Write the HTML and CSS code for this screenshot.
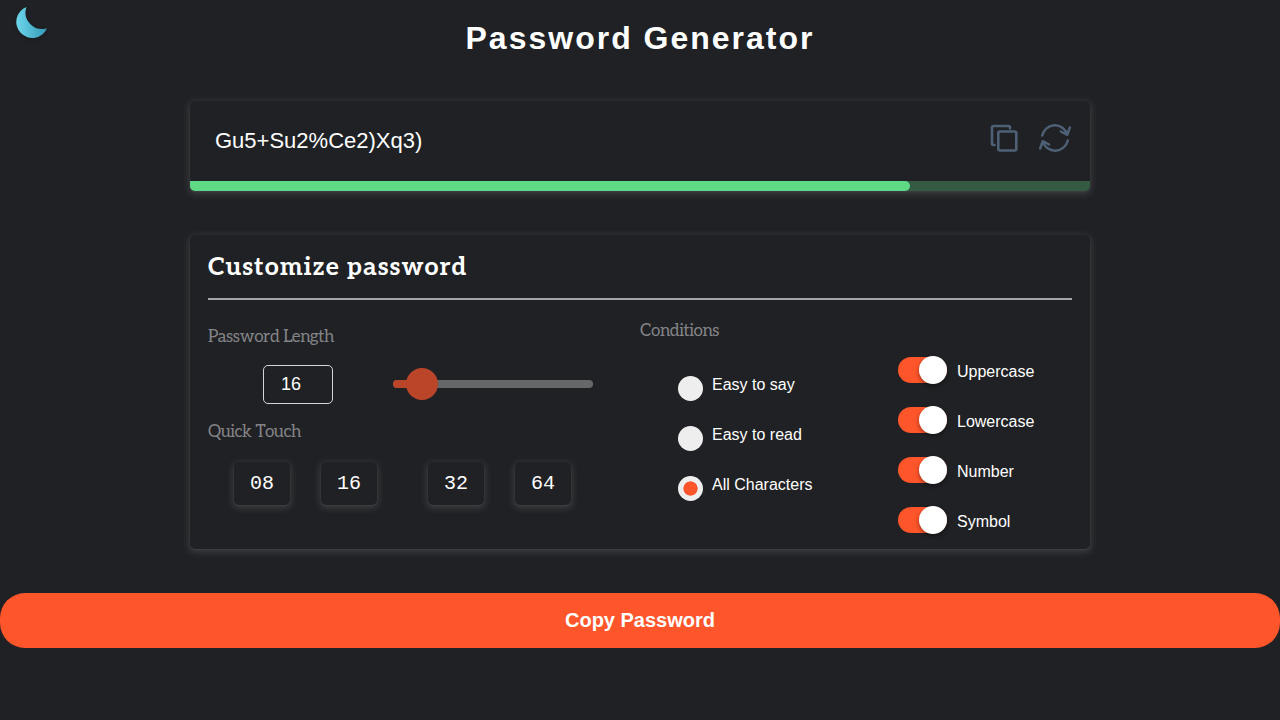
FILE: index.html
```html
<!DOCTYPE html>
<html lang="en">
<head>
<meta charset="utf-8">
<title>Password Generator</title>
<link rel="stylesheet" href="styles.css">
</head>
<body>
<svg class="moon" viewBox="0 0 34 34" width="34" height="34" aria-hidden="true">
  <defs><linearGradient id="night" x1="0" y1="0" x2="1" y2="0"><stop offset="0" stop-color="#6dd6ec"/><stop offset="1" stop-color="#3499b5"/></linearGradient></defs>
  <path d="M11.5 1A16 16 0 1 0 32 22.200A16.500 16.500 0 0 1 11.500 1Z" fill="url(#night)"/>
</svg>
<h1 class="title">Password Generator</h1>
<main class="wrap">
  <section class="panel output">
    <div class="output-row">
      <span class="password">Gu5+Su2%Ce2)Xq3)</span>
      <div class="actions">
        <svg width="28" height="28" viewBox="0 0 28 28" fill="none" stroke="#4e6075" stroke-width="2.6" stroke-linejoin="round" stroke-linecap="round"><path d="M4.500 21H3.500Q2 21 2 19.500V3.500Q2 2 3.500 2H18.500Q20 2 20 3.500V4.500"/><rect x="8.300" y="7.500" width="18" height="19" rx="1.500"/></svg>
        <svg width="34" height="30" viewBox="0 0 34 30" fill="none" stroke="#4e6075" stroke-width="2.500" stroke-linejoin="round" stroke-linecap="round"><path d="M4.200 12.500A13 13 0 0 1 29.300 11.500M22.800 8.500L29.300 11.800L31.800 4.500M29.800 17.500A13 13 0 0 1 4.700 18.500M11.200 21.500L4.700 18.200L2.200 25.500"/></svg>
      </div>
    </div>
    <div class="strength"><div class="strength-value" style="width:80%"></div></div>
  </section>
  <section class="panel settings">
    <h2 class="heading">Customize password</h2>
    <div class="columns">
      <div class="left">
        <h3 class="label">Password Length</h3>
        <div class="length-row">
          <div class="number">16</div>
          <div class="slider"><div class="slider-fill"></div><div class="knob"></div></div>
        </div>
        <h3 class="label">Quick Touch</h3>
        <div class="quick"><button class="chip">08</button><button class="chip">16</button><button class="chip chip-gap">32</button><button class="chip">64</button></div>
      </div>
      <div class="right">
        <div class="conditions">
          <h3 class="label">Conditions</h3>
          <div class="radios">
            <div class="radio"><i class="dot"></i><span>Easy to say</span></div>
            <div class="radio"><i class="dot"></i><span>Easy to read</span></div>
            <div class="radio"><i class="dot dot-on"></i><span>All Characters</span></div>
          </div>
        </div>
        <div class="toggles">
          <div class="toggle"><i class="switch"></i><span>Uppercase</span></div>
          <div class="toggle"><i class="switch"></i><span>Lowercase</span></div>
          <div class="toggle"><i class="switch"></i><span>Number</span></div>
          <div class="toggle"><i class="switch"></i><span>Symbol</span></div>
        </div>
      </div>
    </div>
  </section>
</main>
<button class="copy">Copy Password</button>
</body>
</html>
```
FILE: styles.css
```css
* { box-sizing: border-box; }
body { margin: 0; height: 720px; overflow: hidden; background: #202124; color: #fff; font-family: "Liberation Sans", Arial, sans-serif; font-size: 16px; }
h1, h2, h3 { margin: 0; }
svg, i { display: block; }
.moon { position: absolute; left: 15px; top: 6px; filter: drop-shadow(1px 2px 2px #0003); }
.title { padding-top: 19px; height: 101px; text-align: center; font-size: 32px; line-height: 38px; letter-spacing: 2px; }
.wrap { width: 900px; margin: 0 auto; display: flex; flex-direction: column; gap: 44px; }
.panel { border-radius: 5px; box-shadow: 0 1px 2px rgba(90,92,96,.3), 0 2px 6px 2px rgba(90,92,96,.4); background: #202124; }
.output { height: 90px; overflow: hidden; }
.output-row { height: 80px; padding: 0 18px 0 25px; display: flex; justify-content: space-between; align-items: center; }
.password { font-size: 22px; line-height: 26px; }
.actions { display: flex; align-items: center; gap: 20px; padding-bottom: 6px; }
.strength { height: 10px; background: #345a43; }
.strength-value { height: 10px; background: #60d987; border-radius: 0 5px 5px 0; }
.settings { height: 314px; padding: 0 18px; }
.heading { height: 65px; border-bottom: 2px solid #a3a3a8; padding-top: 16px; font-family: Aleo, "DejaVu Serif Condensed", "DejaVu Serif", serif; font-size: 25px; line-height: 33px; letter-spacing: 1px; }
.columns { display: grid; grid-template-columns: 432px 432px; }
.left { padding-top: 26px; }
.label { color: #838487; font-family: Aleo, "DejaVu Serif Condensed", "DejaVu Serif", serif; font-weight: 400; font-size: 17px; height: 20px; line-height: 22px; letter-spacing: -.4px; }
.length-row { display: flex; align-items: center; gap: 60px; padding: 19px 0 17px 55px; }
.number { width: 70px; height: 39px; border: 1px solid #d5d5d8; border-radius: 5px; padding-left: 17px; font-size: 18px; line-height: 36px; }
.slider { width: 200px; height: 8px; margin-bottom: 1px; border-radius: 4px; background: #666768; position: relative; }
.slider-fill { width: 30px; height: 8px; border-radius: 4px; background: #ba4529; }
.knob { position: absolute; left: 13px; top: -12px; width: 32px; height: 32px; border-radius: 50%; background: #ba4529; }
.quick { display: flex; gap: 31px; padding: 21px 0 0 26px; }
.chip { width: 56px; height: 43px; padding: 0; border: 0; border-radius: 5px; background: #202124; color: #fff; font: 20px/43px "Liberation Mono", monospace; box-shadow: 0 1px 2px rgba(90,92,96,.3), 0 2px 6px 2px rgba(90,92,96,.4); }
.chip-gap { margin-left: 20px; }
.right { display: grid; grid-template-columns: 258px 1fr; }
.conditions { padding-top: 20px; }
.radios { padding: 34px 0 0 38px; }
.radio { height: 50px; display: flex; align-items: flex-start; gap: 9px; line-height: 22px; }
.dot { width: 25px; height: 25px; margin-top: 2px; border-radius: 50%; background: #eee; }
.dot-on { background: radial-gradient(circle, #fe552b 6.8px, #eee 7.4px); }
.toggles { padding-top: 57px; }
.toggle { height: 50px; display: flex; gap: 10px; line-height: 29px; }
.switch { width: 49px; height: 26px; border-radius: 13px; background: #fe552b; position: relative; }
.switch::after { content: ""; position: absolute; right: 0; top: -1px; width: 28px; height: 28px; border-radius: 50%; background: #fff; box-shadow: 0 2px 4px #0006; }
.copy { display: block; width: 100%; height: 55px; margin-top: 44px; border: 0; border-radius: 25px; background: #fe552b; color: #fff; font: bold 20px "Liberation Sans", Arial, sans-serif; }
```
